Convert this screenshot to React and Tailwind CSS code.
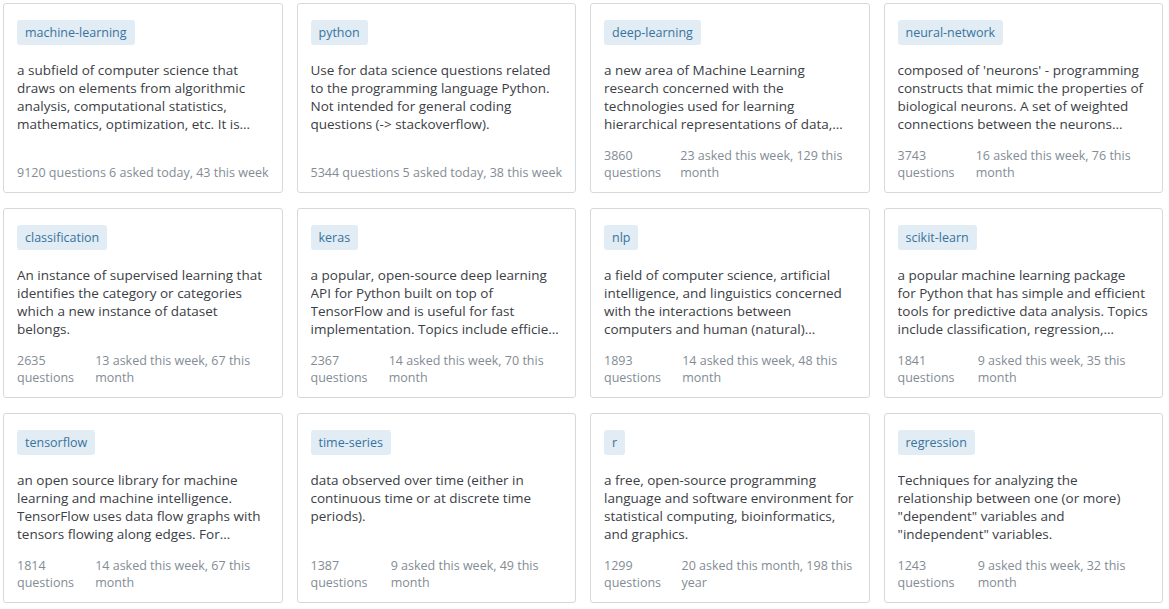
const tags = [
  { name: "machine-learning", desc: "a subfield of computer science that draws on elements from algorithmic analysis, computational statistics, mathematics, optimization, etc. It is…", count: "9120 questions", recent: "6 asked today, 43 this week" },
  { name: "python", desc: "Use for data science questions related to the programming language Python. Not intended for general coding questions (-> stackoverflow).", count: "5344 questions", recent: "5 asked today, 38 this week" },
  { name: "deep-learning", desc: "a new area of Machine Learning research concerned with the technologies used for learning hierarchical representations of data,…", count: "3860 questions", recent: "23 asked this week, 129 this month" },
  { name: "neural-network", desc: "composed of 'neurons' - programming constructs that mimic the properties of biological neurons. A set of weighted connections between the neurons…", count: "3743 questions", recent: "16 asked this week, 76 this month" },
  { name: "classification", desc: "An instance of supervised learning that identifies the category or categories which a new instance of dataset belongs.", count: "2635 questions", recent: "13 asked this week, 67 this month" },
  { name: "keras", desc: "a popular, open-source deep learning API for Python built on top of TensorFlow and is useful for fast implementation. Topics include efficie…", count: "2367 questions", recent: "14 asked this week, 70 this month" },
  { name: "nlp", desc: "a field of computer science, artificial intelligence, and linguistics concerned with the interactions between computers and human (natural)…", count: "1893 questions", recent: "14 asked this week, 48 this month" },
  { name: "scikit-learn", desc: "a popular machine learning package for\u00a0Python that has simple and efficient tools for predictive data analysis. Topics include classification, regression,…", count: "1841 questions", recent: "9 asked this week, 35 this month" },
  { name: "tensorflow", desc: "an open source library for machine learning and machine intelligence. TensorFlow uses data flow graphs with tensors flowing along edges. For…", count: "1814 questions", recent: "14 asked this week, 67 this month" },
  { name: "time-series", desc: "data observed over time (either in continuous time or at discrete time periods).", count: "1387 questions", recent: "9 asked this week, 49 this month" },
  { name: "r", desc: "a free, open-source programming language and software environment for statistical computing, bioinformatics, and graphics.", count: "1299 questions", recent: "20 asked this month, 198 this year" },
  { name: "regression", desc: "Techniques for analyzing the relationship between one (or more) \"dependent\" variables and \"independent\" variables.", count: "1243 questions", recent: "9 asked this week, 32 this month" },
]

export default function App() {
  return (
    <div className="bg-white min-h-screen pt-[3px] pl-[3px]" style={{ fontFamily: "'Open Sans', sans-serif" }}>
      <div className="grid grid-cols-4 w-[1160px] gap-x-[14px] gap-y-[15px]">
        {tags.map((t) => (
          <div key={t.name} className="h-[190px] border border-[#d6d9dc] rounded-[3px] bg-white px-[13px] pt-[15px] pb-[11px] flex flex-col">
            <div>
              <span className="inline-block bg-[#e1ecf4] text-[#39739d] text-[12.5px] leading-[17px] px-[8px] py-[4px] rounded-[3px]">{t.name}</span>
            </div>
            <p className="mt-[16px] text-[13.5px] leading-[18px] text-[#3b4045] line-clamp-4">{t.desc}</p>
            <div className="mt-auto flex justify-between text-[12.5px] leading-[17px] text-[#838c95]">
              <div>{t.count}</div>
              <div>{t.recent}</div>
            </div>
          </div>
        ))}
      </div>
    </div>
  )
}
